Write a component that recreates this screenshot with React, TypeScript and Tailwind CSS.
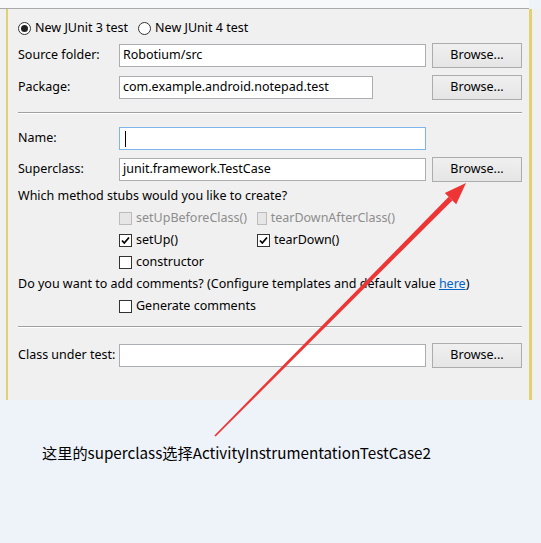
import * as React from 'react';

const ui = { fontFamily: '"Noto Sans", "Open Sans", sans-serif' };

const Browse = () => (
  <div className="w-[90px] h-[25px] border border-[#acacac] bg-gradient-to-b from-[#f0f0f0] to-[#e5e5e5] flex items-center justify-center text-[12.5px] text-black">
    Browse...
  </div>
);

const Field = ({ value, w, focus }: { value?: string; w: string; focus?: boolean }) => (
  <div
    className={`${w} h-[23px] bg-white border ${focus ? 'border-[#7eb4ea]' : 'border-[#abadb3]'} flex items-center px-[3px] text-[12.5px] text-black`}
  >
    {focus ? <span className="w-px h-[16px] bg-black ml-[2px]" /> : value}
  </div>
);

const Row = ({ label, children, className }: { label: string; children: React.ReactNode; className: string }) => (
  <div className={`flex items-center h-[25px] ${className}`}>
    <div className="w-[101px] text-[12.5px] text-black">{label}</div>
    {children}
  </div>
);

const Check = ({ label, checked, disabled }: { label: string; checked?: boolean; disabled?: boolean }) => (
  <div className="flex items-center gap-[4px] w-[138px]">
    <div
      className={`w-[13px] h-[13px] border flex items-center justify-center ${
        disabled ? 'border-[#bcbcbc] bg-[#e6e6e6]' : 'border-[#333333] bg-white'
      }`}
    >
      {checked && (
        <svg width="11" height="11" viewBox="0 0 11 11">
          <path d="M2 5.5 L4.3 8 L9 2.5" fill="none" stroke="#000" strokeWidth="1.8" />
        </svg>
      )}
    </div>
    <span className={`text-[12.5px] ${disabled ? 'text-[#8d8d8d]' : 'text-black'}`}>{label}</span>
  </div>
);

const Radio = ({ label, on }: { label: string; on?: boolean }) => (
  <div className="flex items-center gap-[4px]">
    <div className="w-[13px] h-[13px] rounded-full border border-[#333333] bg-white flex items-center justify-center">
      {on && <div className="w-[7px] h-[7px] rounded-full bg-[#222]" />}
    </div>
    <span className="text-[12.5px] text-black">{label}</span>
  </div>
);

const Sep = ({ className }: { className: string }) => (
  <div className={`mr-[7px] border-t border-[#a0a0a0] border-b border-b-white ${className}`} />
);

export default function App() {
  return (
    <div className="relative w-[541px] h-[543px] bg-[#eef2f9] overflow-hidden" style={ui}>
      <div className="h-[9px] bg-[#f7f8fa] border-b border-[#a9a9a9] w-[529px]" />
      <div className="flex h-[391px] bg-[#f0f0f0]">
        <div className="w-[6px]" />
        <div className="w-[2px] bg-[#e2d26f]" />
        <div className="flex-1 pl-[10px] flex flex-col">
          <div className="flex items-center gap-[10px] h-[18px] mt-[10px]">
            <Radio label="New JUnit 3 test" on />
            <Radio label="New JUnit 4 test" />
          </div>
          <Row label="Source folder:" className="mt-[6px]">
            <Field value="Robotium/src" w="w-[307px]" />
            <div className="ml-[6px]"><Browse /></div>
          </Row>
          <Row label="Package:" className="mt-[7px]">
            <Field value="com.example.android.notepad.test" w="w-[254px]" />
            <div className="ml-[59px]"><Browse /></div>
          </Row>
          <Sep className="mt-[12px]" />
          <Row label="Name:" className="mt-[12px]">
            <Field w="w-[307px]" focus />
          </Row>
          <Row label="Superclass:" className="mt-[6px]">
            <Field value="junit.framework.TestCase" w="w-[307px]" />
            <div className="ml-[6px]"><Browse /></div>
          </Row>
          <div className="h-[21px] mt-[4px] flex items-center text-[12.5px] text-black">
            Which method stubs would you like to create?
          </div>
          <div className="h-[22px] flex items-center pl-[101px]">
            <Check label="setUpBeforeClass()" disabled />
            <Check label="tearDownAfterClass()" disabled />
          </div>
          <div className="h-[22px] flex items-center pl-[101px]">
            <Check label="setUp()" checked />
            <Check label="tearDown()" checked />
          </div>
          <div className="h-[22px] flex items-center pl-[101px]">
            <Check label="constructor" />
          </div>
          <div className="h-[22px] flex items-center text-[12.5px] text-black">
            Do you want to add comments? (Configure templates and default value{' '}
            <span className="text-[#0066cc] underline ml-[3px]">here</span>)
          </div>
          <div className="h-[22px] flex items-center pl-[101px]">
            <Check label="Generate comments" />
          </div>
          <Sep className="mt-[9px]" />
          <Row label="Class under test:" className="mt-[15px]">
            <Field w="w-[307px]" />
            <div className="ml-[6px]"><Browse /></div>
          </Row>
        </div>
        <div className="w-[3px] bg-[#e2d26f]" />
        <div className="w-[9px]" />
      </div>
      <div
        className="mt-[41px] ml-[42px] text-[15.2px] text-black"
        style={{ fontFamily: '"Noto Sans CJK SC", sans-serif' }}
      >
        这里的superclass选择ActivityInstrumentationTestCase2
      </div>
      <svg className="absolute left-0 top-0 pointer-events-none" width="541" height="543">
        <polygon
          points="215.6,436.6 214.4,435.4 448.7,196.8 452.3,200.4"
          fill="#ee3535"
        />
        <polygon points="466,183 444.8,193 456.2,204.2" fill="#ee3535" />
      </svg>
    </div>
  );
}
